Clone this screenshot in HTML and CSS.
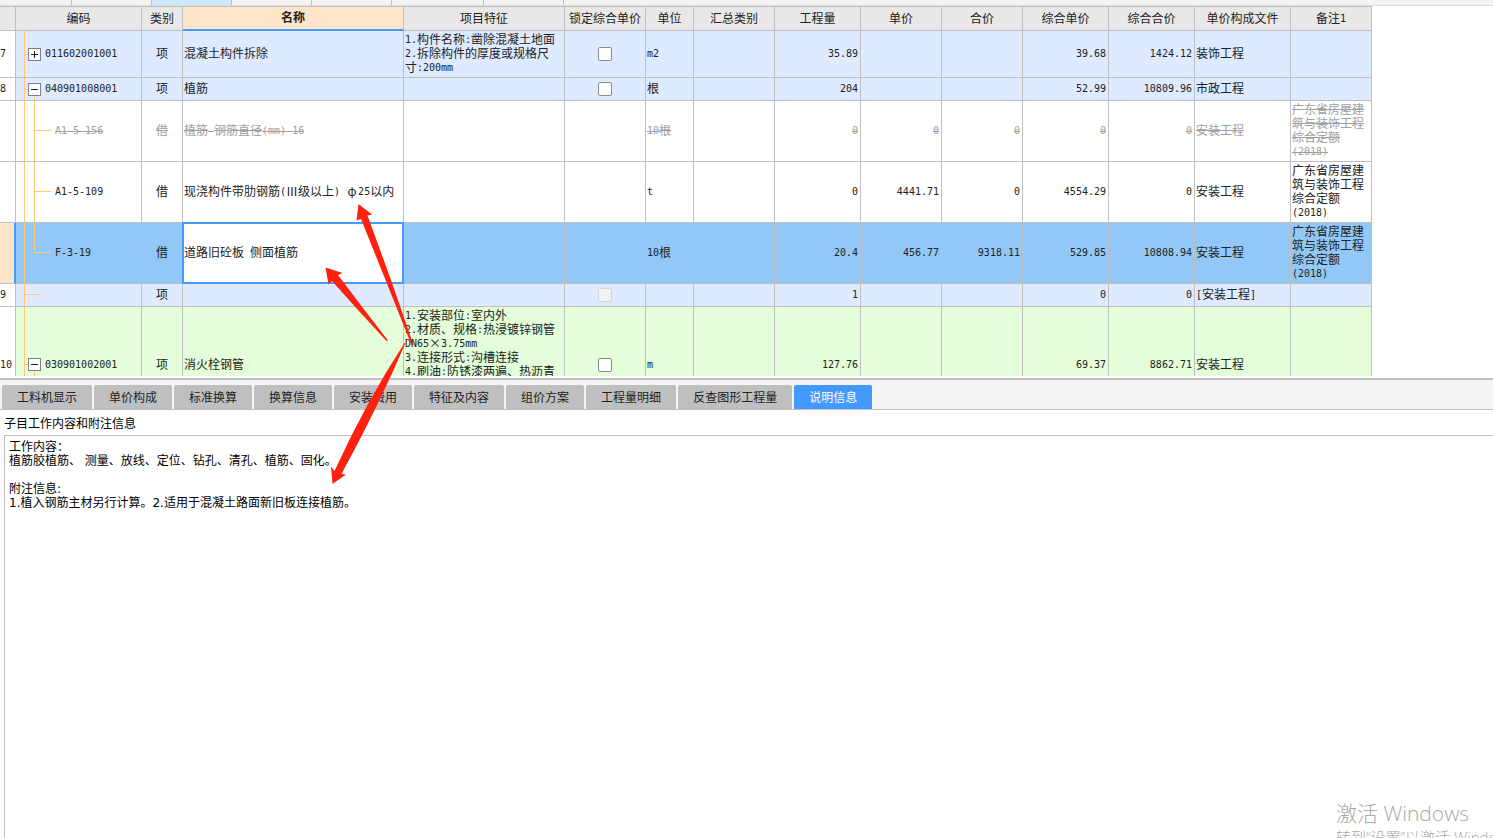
FILE: index.html
```html
<!DOCTYPE html>
<html lang="zh-CN">
<head>
<meta charset="utf-8">
<title>工程计价</title>
<link rel="stylesheet" href="styles.css">
</head>
<body>
<main class="app">
  <div class="strip">
    <span class="strip-tab first"></span><span class="strip-tab"></span><span class="strip-tab current"></span><span class="strip-tab"></span><span class="strip-tab"></span><span class="strip-tab wide"></span><span class="strip-tab"></span>
  </div>

  <section class="sheet">
    <table class="grid">
      <colgroup>
        <col class="w-index"><col class="w-code"><col class="w-kind"><col class="w-name"><col class="w-feature"><col class="w-mid"><col class="w-unit"><col class="w-mid"><col class="w-sum"><col class="w-mid"><col class="w-mid"><col class="w-sum"><col class="w-sum"><col class="w-file"><col class="w-mid">
      </colgroup>
      <thead>
        <tr><th></th><th>编码</th><th>类别</th><th class="active">名称</th><th>项目特征</th><th>锁定综合单价</th><th>单位</th><th>汇总类别</th><th>工程量</th><th>单价</th><th>合价</th><th>综合单价</th><th>综合合价</th><th>单价构成文件</th><th>备注<span class="m">1</span></th></tr>
      </thead>
      <tbody>
        <tr class="item">
          <td class="idx m">7</td>
          <td class="code tree"><div class="node"><button class="toggle" aria-label="展开"><svg viewBox="0 0 11 11"><path d="M2 5.500h7M5.500 2v7"/></svg></button><span class="m">011602001001</span></div></td>
          <td class="kind">项</td>
          <td>混凝土构件拆除</td>
          <td><span class="m">1.</span>构件名称<span class="m">:</span>凿除混凝土地面<br><span class="m">2.</span>拆除构件的厚度或规格尺<br>寸<span class="m">:200mm</span></td>
          <td class="lock"><input type="checkbox" aria-label="锁定综合单价"></td>
          <td class="m">m2</td><td></td>
          <td class="num m">35.89</td><td></td><td></td>
          <td class="num m">39.68</td><td class="num m">1424.12</td>
          <td>装饰工程</td><td></td>
        </tr>
        <tr class="item">
          <td class="idx m">8</td>
          <td class="code tree open"><div class="node"><button class="toggle" aria-label="折叠"><svg viewBox="0 0 11 11"><path d="M2 5.500h7"/></svg></button><span class="m">040901008001</span></div></td>
          <td class="kind">项</td>
          <td>植筋</td><td></td>
          <td class="lock"><input type="checkbox" aria-label="锁定综合单价"></td>
          <td>根</td><td></td>
          <td class="num m">204</td><td></td><td></td>
          <td class="num m">52.99</td><td class="num m">10809.96</td>
          <td>市政工程</td><td></td>
        </tr>
        <tr class="removed">
          <td class="idx"></td>
          <td class="code child m">A1-5-156</td>
          <td class="kind">借</td>
          <td>植筋<span class="m"> </span>钢筋直径<span class="m">(mm) 16</span></td>
          <td></td><td></td>
          <td><span class="m">10</span>根</td><td></td>
          <td class="num m">0</td><td class="num m">0</td><td class="num m">0</td><td class="num m">0</td><td class="num m">0</td>
          <td>安装工程</td>
          <td>广东省房屋建筑与装饰工程综合定额<br><span class="m">(2018)</span></td>
        </tr>
        <tr>
          <td class="idx"></td>
          <td class="code child m">A1-5-109</td>
          <td class="kind">借</td>
          <td>现浇构件带肋钢筋<span class="m">(</span>Ⅲ级以上<span class="m">) </span><span class="wide-char">φ</span><span class="m">25</span>以内</td>
          <td></td><td></td>
          <td class="m">t</td><td></td>
          <td class="num m">0</td><td class="num m">4441.71</td><td class="num m">0</td><td class="num m">4554.29</td><td class="num m">0</td>
          <td>安装工程</td>
          <td>广东省房屋建筑与装饰工程综合定额<br><span class="m">(2018)</span></td>
        </tr>
        <tr class="selected">
          <td class="idx"></td>
          <td class="code child last m">F-3-19</td>
          <td class="kind">借</td>
          <td class="cursor">道路旧砼板<span class="m"> </span>侧面植筋</td>
          <td></td><td></td>
          <td><span class="m">10</span>根</td><td></td>
          <td class="num m">20.4</td><td class="num m">456.77</td><td class="num m">9318.11</td><td class="num m">529.85</td><td class="num m">10808.94</td>
          <td>安装工程</td>
          <td>广东省房屋建筑与装饰工程综合定额<br><span class="m">(2018)</span></td>
        </tr>
        <tr class="item">
          <td class="idx m">9</td>
          <td class="code leaf"></td>
          <td class="kind">项</td>
          <td></td><td></td>
          <td class="lock"><input type="checkbox" aria-label="锁定综合单价" disabled></td>
          <td></td><td></td>
          <td class="num m">1</td><td></td><td></td>
          <td class="num m">0</td><td class="num m">0</td>
          <td><span class="m">[</span>安装工程<span class="m">]</span></td><td></td>
        </tr>
        <tr class="measure">
          <td class="idx m">10</td>
          <td class="code tree open"><div class="node"><button class="toggle" aria-label="折叠"><svg viewBox="0 0 11 11"><path d="M2 5.500h7"/></svg></button><span class="m">030901002001</span></div></td>
          <td class="kind">项</td>
          <td>消火栓钢管</td>
          <td class="feature"><span class="m">1.</span>安装部位<span class="m">:</span>室内外<br><span class="m">2.</span>材质、规格<span class="m">:</span>热浸镀锌钢管<br><span class="m">DN65</span><span class="wide-char">×</span><span class="m">3.75mm</span><br><span class="m">3.</span>连接形式<span class="m">:</span>沟槽连接<br><span class="m">4.</span>刷油<span class="m">:</span>防锈漆两遍、热沥青</td>
          <td class="lock"><input type="checkbox" aria-label="锁定综合单价"></td>
          <td class="m">m</td><td></td>
          <td class="num m">127.76</td><td></td><td></td>
          <td class="num m">69.37</td><td class="num m">8862.71</td>
          <td>安装工程</td><td></td>
        </tr>
      </tbody>
    </table>
  </section>

  <nav class="tabs">
    <button>工料机显示</button><button>单价构成</button><button>标准换算</button><button>换算信息</button><button>安装费用</button><button>特征及内容</button><button>组价方案</button><button>工程量明细</button><button>反查图形工程量</button><button class="on">说明信息</button>
  </nav>

  <section class="notes">
    <label for="notes">子目工作内容和附注信息</label>
    <textarea id="notes" readonly>工作内容：
植筋胶植筋、 测量、放线、定位、钻孔、清孔、植筋、固化。

附注信息:
1.植入钢筋主材另行计算。2.适用于混凝土路面新旧板连接植筋。</textarea>
  </section>

  <svg class="arrows" viewBox="0 0 420 490" aria-hidden="true">
    <path d="M358.500 204L372 214.500L367.500 215.500L391 280L413.500 345L411.500 345L385.500 280L361 219L356.500 220.500Z"/>
    <path d="M325.500 267.500L342.500 273L338 275L364.500 310L388 340.500L386.500 341L358 310L332 281L328.500 284.500Z"/>
    <path d="M332.500 484L346 474.500L341.500 474Q379 405 405.500 343L404.500 343Q366 402 334.500 471L331 466.500Z"/>
  </svg>

  <aside class="watermark">
    <p class="wm-title">激活 Windows</p>
    <p class="wm-text">转到“设置”以激活 Windows</p>
  </aside>
</main>
</body>
</html>
```

FILE: styles.css
```css
* { box-sizing: border-box; }

body {
  margin: 0;
  background: #fff;
  color: #222;
  font: 12px/14px "Noto Sans CJK SC", sans-serif;
}

button, input, textarea { font: inherit; color: inherit; margin: 0; padding: 0; }

/* half-width characters, six pixels each */
.m { font-family: "DejaVu Sans Mono", monospace; font-size: 10px; white-space: pre; }
span.m { line-height: 0; vertical-align: 1px; }

.app {
  position: relative;
  display: flex;
  flex-direction: column;
  height: 100vh;
  overflow: hidden;
}

/* top strip */
.strip {
  flex: none;
  display: flex;
  height: 6px;
  background: #f4f4f4;
  border-bottom: 1px solid #dcdcdc;
}
.strip-tab { width: 80px; border-right: 1px solid #bfbfbf; }
.strip-tab.first { width: 72px; }
.strip-tab.wide { width: 92px; }
.strip-tab.current { background: #cce8ff; }

/* grid */
.sheet {
  flex: none;
  height: calc(45vh - 7px);
  overflow: hidden;
}
.grid {
  table-layout: fixed;
  width: 1372px;
  border-collapse: separate;
  border-spacing: 0;
}
.w-index { width: 16px; }
.w-code { width: 126px; }
.w-kind { width: 41px; }
.w-name { width: 221px; }
.w-feature { width: 161px; }
.w-mid { width: 81px; }
.w-unit { width: 48px; }
.w-sum { width: 86px; }
.w-file { width: 96px; }

th, td {
  border: 0 solid #bfbfbf;
  border-width: 0 1px 1px 0;
  padding: 1px 1px 3px;
}
th {
  height: 25px;
  border-top-width: 1px;
  background: #e8e8e8;
  font-weight: 400;
  white-space: nowrap;
}
th.active {
  background: #ffe6c8;
  border-bottom: 2px solid #4499ff;
  font-weight: 700;
}
td { height: 23px; text-align: left; }
td.m { padding-top: 2px; padding-bottom: 2px; }
td.idx { background: #fff; padding: 0; }
.kind { text-align: center; }
.num { text-align: right; padding-right: 2px; }
td.lock { text-align: center; padding: 0; }

.item { background: #deeaff; }
.removed { color: #a0a0a0; }
.removed td, .removed span { text-decoration: line-through; }
.removed span { display: inline-block; }
.selected { background: #92c8f7; }
.selected .idx { background: #ffe6c8; border-right: 2px solid #4499ff; }
.measure { background: #e3fed8; }
.measure td { height: 116px; }
.measure .feature { vertical-align: top; }
.wide-char { display: inline-block; width: 12px; text-align: center; }

.cursor { position: relative; background: #fff; }
.cursor::after {
  content: "";
  position: absolute;
  inset: -1px;
  border: 2px solid #4499ff;
}

/* tree lines */
.code {
  --line: linear-gradient(90deg, #ffc87d, #ffc87d);
  background: var(--line) 8px 0 / 1px 100% no-repeat;
}
td.code { padding-left: 12px; }
td.child { padding-left: 39px; }
.tree { padding-top: 2px; padding-bottom: 2px; }
.tree { background: var(--line) 8px 0 / 1px 100% no-repeat, var(--line) 8px 50% / 4px 1px no-repeat; }
.tree.open {
  background:
    var(--line) 8px 0 / 1px 100% no-repeat,
    var(--line) 8px 50% / 4px 1px no-repeat,
    var(--line) 18px 100% / 1px 50% no-repeat;
}
.leaf { background: var(--line) 8px 0 / 1px 100% no-repeat, var(--line) 8px 10px / 17px 1px no-repeat; }
.child {
  background:
    var(--line) 8px 0 / 1px 100% no-repeat,
    var(--line) 18px 0 / 1px 100% no-repeat,
    var(--line) 18px 29px / 17px 1px no-repeat;
}
.child.last {
  background:
    var(--line) 8px 0 / 1px 100% no-repeat,
    var(--line) 18px 0 / 1px 30px no-repeat,
    var(--line) 18px 29px / 17px 1px no-repeat;
}
.node { display: flex; align-items: center; gap: 4px; }
.toggle {
  display: block;
  width: 13px;
  height: 13px;
  border: 1px solid #808080;
  background: #fff;
}
.toggle svg { display: block; width: 11px; height: 11px; }
.toggle path { stroke: #222; stroke-width: 1; fill: none; }

input[type="checkbox"] {
  appearance: none;
  display: block;
  width: 14px;
  height: 14px;
  margin: 0 auto;
  border: 1px solid #8c8c8c;
  border-radius: 2px;
  background: #fff;
}
input[type="checkbox"]:disabled { border-color: #d4d4d4; background: #f2f2f2; }

/* lower tabs */
.tabs {
  flex: none;
  display: flex;
  gap: 2px;
  margin-top: 2px;
  padding: 5px 2px 0;
  border-top: 2px solid #bfbfbf;
  border-bottom: 1px solid #bfbfbf;
  background: #f4f4f4;
}
.tabs button {
  height: 24px;
  padding: 0 15px;
  border: 0;
  border-radius: 2px 2px 0 0;
  background: #bfbfbf;
  white-space: nowrap;
}
.tabs .on { background: #4499ff; color: #fff; }

/* notes */
.notes {
  flex: 1;
  display: flex;
  flex-direction: column;
  padding: 6px 0 0 4px;
  color: #000;
}
.notes label { margin-bottom: 5px; }
.notes textarea {
  flex: 1;
  padding: 4px;
  border: 0 solid #bfbfbf;
  border-width: 1px 0 0 1px;
  background: #fff;
  font-family: "DejaVu Sans", "Noto Sans CJK SC", sans-serif;
  line-height: 14px;
  resize: none;
  outline: 0;
}

/* overlays */
.arrows {
  position: absolute;
  left: 0;
  top: 0;
  width: 420px;
  height: 490px;
  pointer-events: none;
}
.arrows path { fill: #ff2010; }

.watermark {
  position: absolute;
  right: 0;
  bottom: 0;
  width: 157px;
  height: 39px;
  overflow: hidden;
  color: #aaa;
  font-family: "Open Sans", "Noto Sans CJK SC", sans-serif;
  font-weight: 300;
  white-space: nowrap;
  pointer-events: none;
}
.watermark p { margin: 0; }
.wm-title { font-size: 21px; line-height: 28px; }
.wm-text { font-size: 15px; line-height: 20px; }
```
